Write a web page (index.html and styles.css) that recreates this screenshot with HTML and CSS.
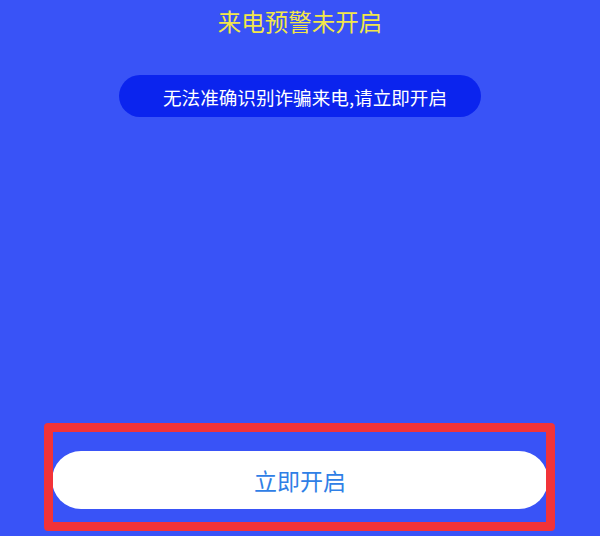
FILE: index.html
```html
<!DOCTYPE html>
<html lang="zh-CN">
<head>
<meta charset="utf-8">
<title>来电预警未开启</title>
<link rel="stylesheet" href="styles.css">
</head>
<body>
<main class="screen">
  <h1 class="title">来电预警未开启</h1>
  <p class="notice">无法准确识别诈骗来电,请立即开启</p>
  <div class="action">
    <button class="open-btn" type="button">立即开启</button>
    <div class="highlight" aria-hidden="true"></div>
  </div>
</main>
</body>
</html>
```

FILE: styles.css
```css
html, body {
  margin: 0;
  padding: 0;
}

body {
  width: 600px;
  height: 536px;
  overflow: hidden;
  background: #3953f7;
  font-family: "Noto Sans CJK SC", "Noto Sans", sans-serif;
}

.screen {
  display: flex;
  flex-direction: column;
  align-items: center;
  height: 536px;
}

.title {
  margin: 0;
  height: 43px;
  line-height: 43px;
  font-size: 23.5px;
  font-weight: 400;
  color: #f2e74a;
}

.notice {
  margin: 32px 0 0;
  width: 362px;
  height: 42px;
  box-sizing: border-box;
  padding-left: 10px;
  border-radius: 21px;
  background: #0b24ee;
  color: #ffffff;
  font-size: 18.6px;
  display: flex;
  align-items: center;
  justify-content: center;
}

.action {
  margin-top: auto;
  margin-bottom: 27px;
  position: relative;
}

.open-btn {
  display: flex;
  align-items: center;
  justify-content: center;
  width: 496px;
  height: 58px;
  border: 0;
  border-radius: 29px;
  background: #ffffff;
  color: #2f80e6;
  font-family: inherit;
  font-size: 23px;
  padding: 0;
}

.highlight {
  position: absolute;
  left: -8px;
  top: -28px;
  width: 511px;
  height: 108px;
  box-sizing: border-box;
  border: 9px solid #f23338;
  border-radius: 4px;
}
```
